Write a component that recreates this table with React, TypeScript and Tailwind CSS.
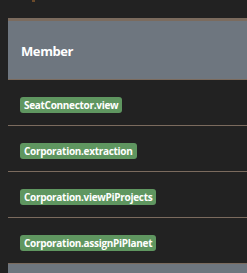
const perms = [
  "SeatConnector.view",
  "Corporation.extraction",
  "Corporation.viewPiProjects",
  "Corporation.assignPiPlanet",
];

export default function App() {
  return (
    <div className="w-[247px] h-[273px] overflow-hidden bg-[#222222] font-['Open_Sans',sans-serif]">
      <div className="h-[18px] pl-[32px]">
        <div className="w-[3px] h-[2px] bg-[#6b4a2a]" />
      </div>
      <div className="ml-2 w-[260px]">
        <div className="h-[62px] border-t-[3px] border-b border-[#7b6b5e] bg-[#6e767f] pl-[13px] flex items-center">
          <span className="text-white font-bold text-[13px] tracking-[-0.4px] pt-[4px]">Member</span>
        </div>
        {perms.map((p) => (
          <div key={p} className="h-[46px] border-b border-[#7b6b5e] pl-3 pt-[17px] flex items-start">
            <span className="flex h-4 items-center rounded-[3px] bg-[#5f9660] px-[4px] text-white font-bold text-[10px] tracking-[-0.3px]">
              {p}
            </span>
          </div>
        ))}
        <div className="h-[20px] bg-[#6e767f]" />
      </div>
    </div>
  );
}
